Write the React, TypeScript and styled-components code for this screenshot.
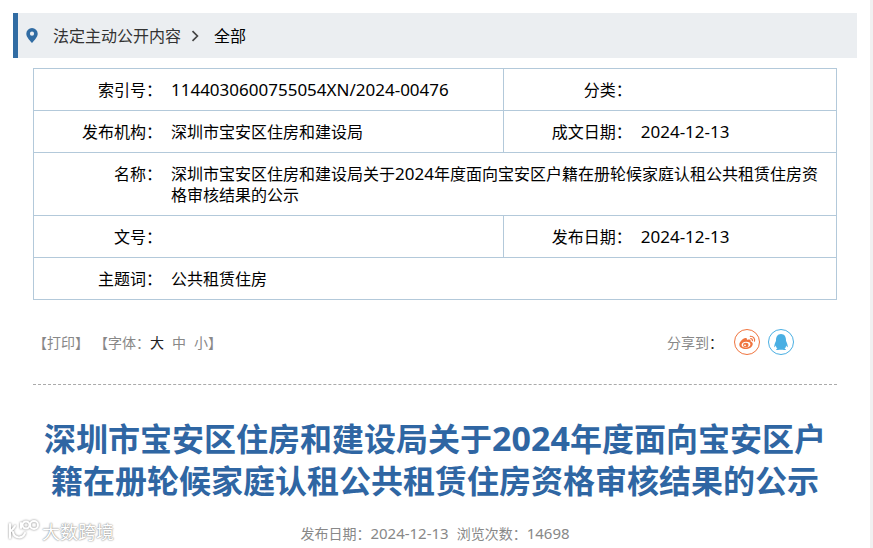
import React from "react";
import styled, { createGlobalStyle, css } from "styled-components";
import { FaQq } from "react-icons/fa";

const Global = createGlobalStyle`
  * { box-sizing: border-box; }
  body {
    margin: 0;
    background: #fff;
    color: #000;
    font-family: "Noto Sans CJK SC", "Noto Sans", sans-serif;
    font-size: 16px;
    line-height: 21px;
  }
`;

const Page = styled.div`
  min-height: 100vh;
  padding: 13px 13px 0;
  border-right: 3px solid #f1f1f1;
`;

const Breadcrumb = styled.nav`
  display: flex;
  align-items: center;
  height: 45px;
  padding-left: 8px;
  border-left: 5px solid #316ca3;
  background: #ebeef1;
`;

const Crumb = styled.a<{ $current?: boolean }>`
  color: ${(p) => (p.$current ? "#000" : "#333")};
  text-decoration: none;
`;

const Pin = styled.svg`
  width: 12px;
  height: 15px;
  margin-right: 15px;
`;

const Chevron = styled.svg`
  width: 8px;
  height: 12px;
  margin: 0 15px 0 10px;
`;

const Content = styled.main`
  padding: 10px 20px 0;
`;

const InfoTable = styled.table`
  width: 100%;
  table-layout: fixed;
  border-collapse: collapse;
  border: 1px solid #b3c9da;
`;

const LabelCol = styled.col`
  width: 16%;
`;

const DateCol = styled.col`
  width: 25.5%;
`;

const Row = styled.tr`
  border-bottom: 1px solid #b3c9da;
`;

const Label = styled.th<{ $divided?: boolean }>`
  padding: 10px 0;
  font-weight: 400;
  text-align: right;
  vertical-align: top;
  ${(p) => p.$divided && css`border-left: 1px solid #b3c9da;`}
`;

const Value = styled.td`
  padding: 10px 9px;
  vertical-align: top;
`;

const Num = styled.span<{ $size: number }>`
  font-family: "Noto Sans", sans-serif;
  font-size: ${(p) => p.$size}px;
  line-height: 1;
`;

const Tools = styled.div`
  display: flex;
  justify-content: space-between;
  align-items: center;
  height: 85px;
  border-bottom: 1px dashed #aaa;
  color: #888;
  font-size: 14px;
`;

const Group = styled.div`
  display: flex;
  align-items: center;
`;

const PrintGroup = styled(Group)`
  margin-right: 5px;
`;

const TextButton = styled.button<{ $active?: boolean }>`
  padding: 0;
  border: 0;
  background: none;
  color: ${(p) => (p.$active ? "#222" : "inherit")};
  font: inherit;
  cursor: pointer;
`;

const Sizes = styled.div`
  display: flex;
  gap: 8px;
`;

const Share = styled(Group)`
  gap: 8px;
  padding-right: 43px;
`;

const ShareText = styled.span`
  margin-right: 3px;
`;

const Dark = styled.span`
  color: #222;
`;

const ShareLink = styled.a<{ $color: string }>`
  display: flex;
  align-items: center;
  justify-content: center;
  width: 26px;
  height: 26px;
  border: 1px solid ${(p) => p.$color};
  border-radius: 50%;
  color: ${(p) => p.$color};
`;

const Title = styled.h1`
  margin: 31px 0 0;
  color: #2f66a3;
  font-size: 32px;
  font-weight: 700;
  line-height: 42px;
  text-align: center;
`;

const Meta = styled.p`
  display: flex;
  justify-content: center;
  gap: 8px;
  margin: 23px 0 0;
  color: #888;
  font-size: 14px;
`;

const Watermark = styled.div`
  position: absolute;
  left: 8px;
  top: 519px;
  display: flex;
  align-items: center;
  gap: 2px;
  color: #fff;
  font-size: 18px;
  line-height: 24px;
  text-shadow: 0 0 2px #888, 0 0 1px #999;
`;

const WatermarkLogo = styled.svg`
  width: 32px;
  height: 24px;
  filter: drop-shadow(0 0 1px #888);
`;

function WeiboIcon() {
  return (
    <svg width="17" height="15" viewBox="0 0 17 15" aria-hidden="true">
      <path
        fill="currentColor"
        fillRule="evenodd"
        d="M6.500 3C7.800 2.800 8.300 3.700 7.900 5 10 4.200 12 4.400 11.700 6.500 13.200 7 14 8 13.700 9.500 13 12.500 9.800 14 6.800 14 3.300 14 .3 12.300.3 9.500.3 7 3.800 3.300 6.500 3ZM7 6.800C4.300 6.900 2.500 8.300 2.600 10 2.700 11.800 4.700 12.700 7.100 12.500 9.700 12.300 11.500 10.900 11.400 9.200 11.300 7.500 9.400 6.700 7 6.800Z"
      />
      <ellipse cx="6.800" cy="9.900" rx="2.700" ry="2.200" fill="currentColor" />
      <circle cx="6" cy="10.300" r=".9" fill="#fff" />
      <path d="M11.300 1.300A3.900 3.900 0 0 1 15.500 6.200M11.700 3.600A1.700 1.700 0 0 1 13.400 5.600" fill="none" stroke="currentColor" strokeWidth="1.200" strokeLinecap="round" />
    </svg>
  );
}

export default function App() {
  return (
    <>
      <Global />
      <Page>
        <Breadcrumb aria-label="breadcrumb">
          <Pin viewBox="0 0 12 15" aria-hidden="true">
            <path fill="#316ca3" fillRule="evenodd" d="M6 0A5.700 5.700 0 0 0 .3 5.700C.3 9 3.500 12 6 15 8.500 12 11.700 9 11.700 5.700A5.700 5.700 0 0 0 6 0ZM6 3.600a2.100 2.100 0 1 1 0 4.200 2.100 2.100 0 0 1 0-4.200Z" />
          </Pin>
          <Crumb href="#open">法定主动公开内容</Crumb>
          <Chevron viewBox="0 0 8 12" aria-hidden="true">
            <path d="M1.500 1.200 6.400 6 1.500 10.800" fill="none" stroke="#444" strokeWidth="1.700" />
          </Chevron>
          <Crumb href="#all" $current>全部</Crumb>
        </Breadcrumb>
        <Content>
          <InfoTable>
            <colgroup>
              <LabelCol />
              <col />
              <LabelCol />
              <DateCol />
            </colgroup>
            <tbody>
              <Row>
                <Label scope="row">索引号：</Label>
                <Value><Num $size={17}>1144030600755054XN/2024-00476</Num></Value>
                <Label scope="row" $divided>分类：</Label>
                <Value />
              </Row>
              <Row>
                <Label scope="row">发布机构：</Label>
                <Value>深圳市宝安区住房和建设局</Value>
                <Label scope="row" $divided>成文日期：</Label>
                <Value><Num $size={17}>2024-12-13</Num></Value>
              </Row>
              <Row>
                <Label scope="row">名称：</Label>
                <Value colSpan={3}>
                  深圳市宝安区住房和建设局关于<Num $size={17}>2024</Num>年度面向宝安区户籍在册轮候家庭认租公共租赁住房资格审核结果的公示
                </Value>
              </Row>
              <Row>
                <Label scope="row">文号：</Label>
                <Value />
                <Label scope="row" $divided>发布日期：</Label>
                <Value><Num $size={17}>2024-12-13</Num></Value>
              </Row>
              <Row>
                <Label scope="row">主题词：</Label>
                <Value colSpan={3}>公共租赁住房</Value>
              </Row>
            </tbody>
          </InfoTable>
          <Tools>
            <Group>
              <PrintGroup>【<TextButton type="button">打印</TextButton>】</PrintGroup>
              <Group>
                【字体：
                <Sizes>
                  <TextButton type="button" $active>大</TextButton>
                  <TextButton type="button">中</TextButton>
                  <TextButton type="button">小</TextButton>
                </Sizes>
                】
              </Group>
            </Group>
            <Share>
              <ShareText>分享到<Dark>：</Dark></ShareText>
              <ShareLink $color="#f0743e" href="#weibo" aria-label="微博"><WeiboIcon /></ShareLink>
              <ShareLink $color="#4aafe3" href="#qq" aria-label="QQ"><FaQq size={16} /></ShareLink>
            </Share>
          </Tools>
          <Title>
            深圳市宝安区住房和建设局关于<Num $size={34}>2024</Num>年度面向宝安区户籍在册轮候家庭认租公共租赁住房资格审核结果的公示
          </Title>
          <Meta>
            <span>发布日期：<Num $size={15}>2024-12-13</Num></span>
            <span>浏览次数：<Num $size={15}>14698</Num></span>
          </Meta>
        </Content>
        <Watermark>
          <WatermarkLogo viewBox="0 0 32 24" fill="none" stroke="#fff" strokeWidth="2" strokeLinecap="round" aria-hidden="true">
            <path d="M2 5v14M2 13C4 11 6 9 7 7M5 13c1 6 9 8 12 1M13 9V4" />
            <circle cx="18" cy="6" r="3.500" />
            <circle cx="26" cy="6" r="4" />
          </WatermarkLogo>
          大数跨境
        </Watermark>
      </Page>
    </>
  );
}
